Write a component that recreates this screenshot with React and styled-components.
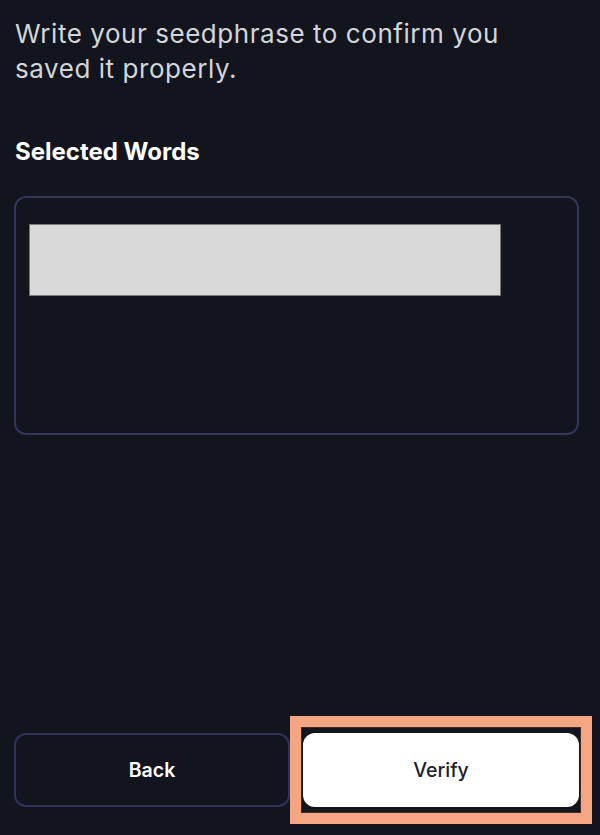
import React from "react";
import styled, { createGlobalStyle } from "styled-components";

const Global = createGlobalStyle`
  html, body { margin: 0; padding: 0; background: #12151d; }
  * { box-sizing: border-box; }
`;

const Page = styled.div`
  width: 600px;
  height: 835px;
  background: #12151d;
  display: flex;
  flex-direction: column;
  padding: 16px 21px 28px 14px;
  font-family: Inter, "Noto Sans", sans-serif;
  overflow: hidden;
`;

const Description = styled.p`
  margin: 0;
  padding-left: 1px;
  font-size: 26px;
  line-height: 35px;
  letter-spacing: 0.55px;
  font-weight: 400;
  color: #d4d5d8;
  max-width: 520px;
`;

const Heading = styled.h2`
  margin: 51px 0 0 1px;
  font-size: 24px;
  line-height: 30px;
  font-weight: 700;
  color: #ffffff;
`;

const WordsBox = styled.div`
  margin-top: 29px;
  height: 239px;
  border: 2px solid #34355a;
  border-radius: 12px;
  padding: 26px 0 0 13px;
`;

const Placeholder = styled.div`
  width: 472px;
  height: 72px;
  background: #d9d9d9;
  border: 1px solid #7a7a7a;
`;

const Spacer = styled.div`
  flex: 1;
`;

const ButtonRow = styled.div`
  display: grid;
  grid-template-columns: 1fr 1fr;
  gap: 13px;
`;

const Button = styled.button`
  height: 74px;
  border-radius: 12px;
  font-family: Inter, "Liberation Sans", sans-serif;
  font-size: 19.5px;
  font-weight: ${(p) => (p.$primary ? 500 : 600)};
  cursor: pointer;
  width: 100%;
  border: 2px solid ${(p) => (p.$primary ? "#ffffff" : "#30325a")};
  background: ${(p) => (p.$primary ? "#ffffff" : "transparent")};
  color: ${(p) => (p.$primary ? "#1b1d2a" : "#ffffff")};
`;

const Highlight = styled.div`
  position: relative;
  &::after {
    content: "";
    position: absolute;
    left: -13px;
    right: -13px;
    top: -17px;
    bottom: -17px;
    border: 11px solid #f4a683;
    box-shadow: inset 0 0 0 1px #4a2a26;
    pointer-events: none;
  }
`;

export default function App() {
  return (
    <>
      <Global />
      <Page>
        <Description>
          Write your seedphrase to confirm you saved it properly.
        </Description>
        <Heading>Selected Words</Heading>
        <WordsBox>
          <Placeholder />
        </WordsBox>
        <Spacer />
        <ButtonRow>
          <Button>Back</Button>
          <Highlight>
            <Button $primary>Verify</Button>
          </Highlight>
        </ButtonRow>
      </Page>
    </>
  );
}
